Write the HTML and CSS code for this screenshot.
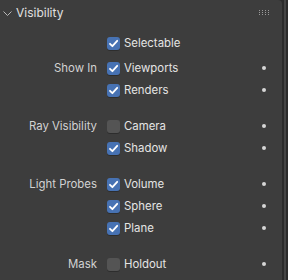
FILE: index.html
```html
<!DOCTYPE html>
<html lang="en">
<head>
  <meta charset="UTF-8">
  <title>Visibility</title>
  <link rel="stylesheet" href="styles.css">
</head>
<body>
  <div class="panel">
    <div class="header">
      <svg class="chevron" width="9" height="5" viewBox="0 0 9 5"><path d="M0.5 0.5 L4.5 4.5 L8.5 0.5" fill="none" stroke="#b8b8b8" stroke-width="1"/></svg>
      <span class="title">Visibility</span>
      <svg class="grip" width="12" height="6" viewBox="0 0 12 6">
        <g fill="#9a9a9a">
          <rect x="0" y="0" width="1" height="1"/><rect x="3" y="0" width="1" height="1"/><rect x="6" y="0" width="1" height="1"/><rect x="9" y="0" width="1" height="1"/>
          <rect x="0" y="2" width="1" height="1"/><rect x="3" y="2" width="1" height="1"/><rect x="6" y="2" width="1" height="1"/><rect x="9" y="2" width="1" height="1"/>
          <rect x="0" y="4" width="1" height="1"/><rect x="3" y="4" width="1" height="1"/><rect x="6" y="4" width="1" height="1"/><rect x="9" y="4" width="1" height="1"/>
        </g>
      </svg>
    </div>

    <div class="content">
      <div class="group first">
        <div class="row">
          <span class="label"></span>
          <span class="check on"></span><span class="name">Selectable</span>
          <span></span>
        </div>
      </div>

      <div class="group">
        <div class="row">
          <span class="label">Show In</span>
          <span class="check on"></span><span class="name">Viewports</span>
          <span class="dot"></span>
        </div>
        <div class="row">
          <span class="label"></span>
          <span class="check on"></span><span class="name">Renders</span>
          <span class="dot"></span>
        </div>
      </div>

      <div class="group">
        <div class="row">
          <span class="label">Ray Visibility</span>
          <span class="check"></span><span class="name">Camera</span>
          <span class="dot"></span>
        </div>
        <div class="row">
          <span class="label"></span>
          <span class="check on"></span><span class="name">Shadow</span>
          <span class="dot"></span>
        </div>
      </div>

      <div class="group">
        <div class="row">
          <span class="label">Light Probes</span>
          <span class="check on"></span><span class="name">Volume</span>
          <span class="dot"></span>
        </div>
        <div class="row">
          <span class="label"></span>
          <span class="check on"></span><span class="name">Sphere</span>
          <span class="dot"></span>
        </div>
        <div class="row">
          <span class="label"></span>
          <span class="check on"></span><span class="name">Plane</span>
          <span class="dot"></span>
        </div>
      </div>

      <div class="group">
        <div class="row">
          <span class="label">Mask</span>
          <span class="check"></span><span class="name">Holdout</span>
          <span class="dot"></span>
        </div>
      </div>
    </div>
  </div>
  <div class="scroll"></div>
</body>
</html>
```

FILE: styles.css
```css
body {
  margin: 0;
  width: 288px;
  height: 280px;
  background-color: #2b2b2b;
  font-family: Inter, "Noto Sans", sans-serif;
  font-size: 11.4px;
  display: flex;
  overflow: hidden;
}
.panel {
  width: 282px;
  height: 280px;
  background-color: #3d3d3d;
  border-top-right-radius: 4px;
}
.scroll {
  width: 2px;
  height: 280px;
  margin-left: 2px;
  background-color: #454545;
}
.header {
  height: 25px;
  display: flex;
  align-items: center;
  color: #e0e0e0;
}
.chevron {
  margin-left: 3px;
  margin-right: 4px;
  margin-top: 1px;
}
.title {
  flex: 1;
  font-size: 12px;
}
.grip {
  margin-right: 11px;
}
.content {
  padding-top: 7px;
}
.group {
  margin-bottom: 14px;
}
.group.first {
  margin-bottom: 3px;
}
.row {
  height: 22px;
  display: grid;
  grid-template-columns: 107px 13px 1fr 4px;
  align-items: center;
  padding-right: 16px;
}
.label {
  text-align: right;
  color: #d2d2d2;
  margin-right: 10px;
  white-space: nowrap;
}
.check {
  width: 13px;
  height: 13px;
  border-radius: 3px;
  background-color: #545454;
  box-shadow: 0 1px 0 rgba(0, 0, 0, 0.25);
}
.check.on {
  background-color: #4772b3;
  background-image: url("data:image/svg+xml,%3Csvg xmlns='http://www.w3.org/2000/svg' width='13' height='13' viewBox='0 0 13 13'%3E%3Cpath d='M3 6.8 L5.4 9.2 L10.2 3.8' fill='none' stroke='white' stroke-width='1.8' stroke-linecap='round' stroke-linejoin='round'/%3E%3C/svg%3E");
}
.name {
  padding-left: 4px;
  color: #e4e4e4;
}
.dot {
  width: 4px;
  height: 4px;
  border-radius: 50%;
  background-color: #d6d6d6;
}
```
